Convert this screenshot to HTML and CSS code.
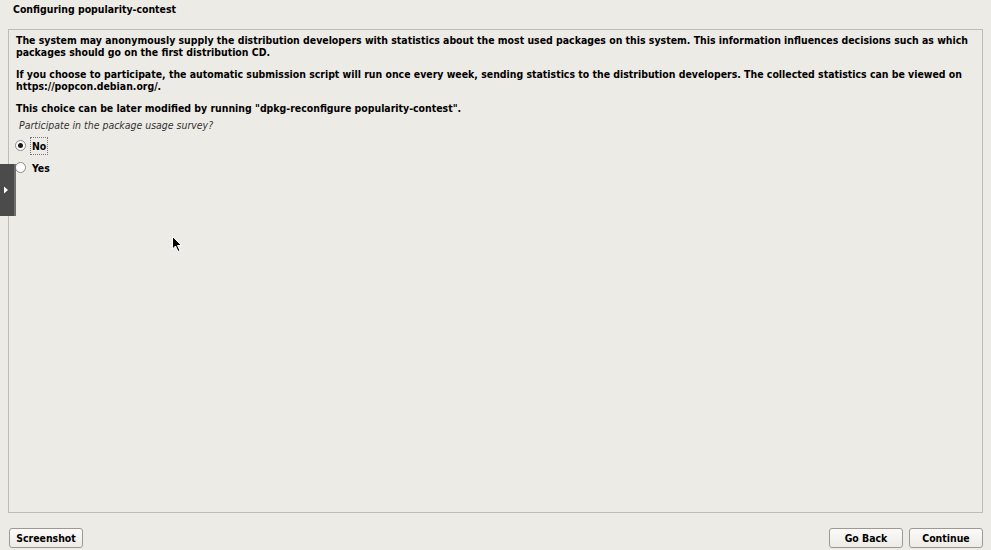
FILE: index.html
```html
<!DOCTYPE html>
<html>
<head>
<meta charset="utf-8">
<link rel="stylesheet" href="styles.css">
</head>
<body>
<div class="page">
  <div class="title">Configuring popularity-contest</div>
  <div class="panel">
    <p class="para">The system may anonymously supply the distribution developers with statistics about the most used packages on this system. This information influences decisions such as which packages should go on the first distribution CD.</p>
    <p class="para">If you choose to participate, the automatic submission script will run once every week, sending statistics to the distribution developers. The collected statistics can be viewed on https://popcon.debian.org/.</p>
    <p class="para">This choice can be later modified by running "dpkg-reconfigure popularity-contest".</p>
    <div class="question">Participate in the package usage survey?</div>
    <div class="options">
      <div class="option"><span class="radio checked"></span><span class="label focus">No</span></div>
      <div class="option"><span class="radio"></span><span class="label">Yes</span></div>
    </div>
  </div>
  <div class="footer">
    <button class="btn">Screenshot</button>
    <div class="right">
      <button class="btn">Go Back</button>
      <button class="btn">Continue</button>
    </div>
  </div>
</div>
<div class="sidetab"><svg width="6" height="8" viewBox="0 0 6 8"><path d="M1 0.5 L5 4 L1 7.5 Z" fill="#ffffff"/></svg></div>
<svg class="cursor" width="12" height="18" viewBox="0 0 12 18"><path d="M0.5 0.5 L0.5 13 L3.5 10 L6 15.5 L8 14.5 L5.5 9.5 L9.5 9.5 Z" fill="#000" stroke="#fff" stroke-width="1"/></svg>
</body>
</html>
```
FILE: styles.css
```css
html, body {
  margin: 0;
  padding: 0;
  background: #edebe6;
  width: 991px;
  height: 550px;
  overflow: hidden;
}
body {
  font-family: "DejaVu Sans Condensed", "DejaVu Sans", sans-serif;
  font-size: 10.45px;
  color: #000;
  position: relative;
}
.page {
  display: flex;
  flex-direction: column;
  height: 550px;
}
.title {
  font-weight: bold;
  height: 29px;
  box-sizing: border-box;
  padding: 3px 0 0 13px;
  line-height: 12px;
}
.panel {
  margin: 0 8px;
  height: 484px;
  box-sizing: border-box;
  border: 1px solid #c2bbb0;
  padding: 5px 7px;
}
.para {
  margin: 0 0 11px 0;
  font-weight: bold;
  line-height: 11.5px;
}
.para:nth-of-type(3) {
  margin-bottom: 4px;
}
.question {
  font-style: italic;
  color: #333;
  margin: 0 0 0 3px;
  line-height: 12px;
}
.options {
  display: flex;
  flex-direction: column;
  gap: 6px;
  margin-top: 7px;
}
.option {
  display: flex;
  align-items: center;
  height: 16px;
}
.radio {
  width: 9px;
  height: 9px;
  border: 1px solid #8c8a86;
  border-radius: 50%;
  background: #fff;
  margin-left: -1px;
  margin-right: 4px;
  position: relative;
  box-sizing: content-box;
}
.radio.checked::after {
  content: "";
  position: absolute;
  left: 2px;
  top: 2px;
  width: 5px;
  height: 5px;
  border-radius: 50%;
  background: #1a1a1a;
}
.label {
  font-weight: bold;
  padding: 2px 1px;
  border: 1px solid transparent;
}
.label.focus {
  border: 1px dotted #777;
}
.footer {
  display: flex;
  justify-content: space-between;
  padding: 15px 8px 0 9px;
}
.right {
  display: flex;
  gap: 6px;
}
.btn {
  font-family: "DejaVu Sans Condensed", "DejaVu Sans", sans-serif;
  font-weight: bold;
  font-size: 10.45px;
  color: #000;
  width: 74px;
  height: 20px;
  border: 1px solid #9d9891;
  border-radius: 3px;
  background: linear-gradient(#fbfaf9, #eeebe6);
  padding: 0;
}
.sidetab {
  position: absolute;
  left: 0;
  top: 164px;
  height: 52px;
  background: #4b4b4b;
  border-right: 2px solid #6e6e6e;
  display: flex;
  align-items: center;
  padding-left: 3px;
  box-sizing: border-box;
  width: 16px;
}
.cursor {
  position: absolute;
  left: 172px;
  top: 236px;
}
```
